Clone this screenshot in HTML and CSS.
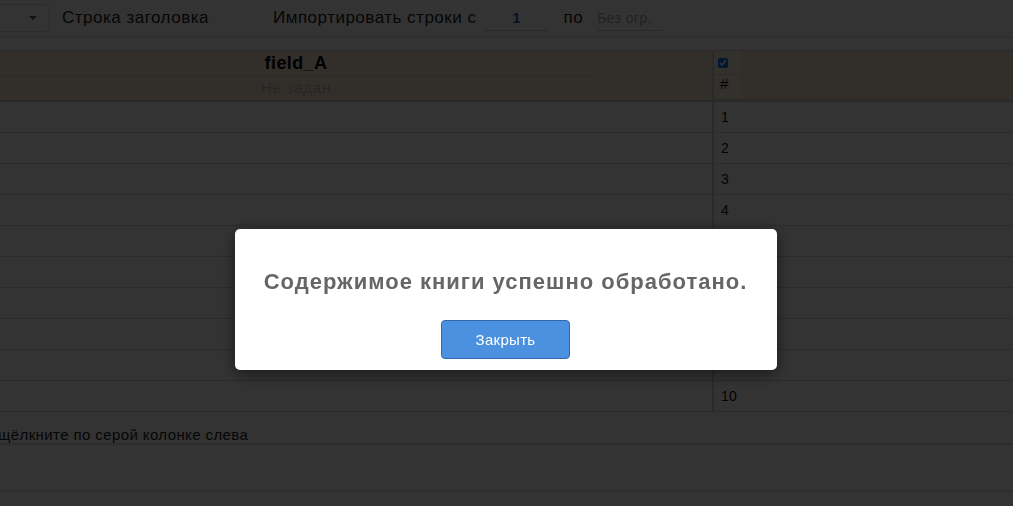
FILE: index.html
```html
<!DOCTYPE html>
<html lang="ru">
<head>
    <meta charset="UTF-8">
    <title>Импорт строк</title>
    <link rel="stylesheet" href="styles.css">
</head>
<body>
    <div class="toolbar">
        <div class="select"><span class="caret"></span></div>
        <label class="tool-label">Строка заголовка</label>
        <label class="tool-label range">Импортировать строки с</label>
        <input class="line-input from" type="text" value="1">
        <label class="tool-label">по</label>
        <input class="line-input to" type="text" placeholder="Без огр.">
    </div>

    <div class="sheet">
        <div class="row head">
            <div class="cell field">
                <div class="field-name">field_A</div>
                <div class="field-type">Не задан</div>
            </div>
            <div class="cell num">
                <div class="check"><input type="checkbox" checked></div>
                <div class="hash">#</div>
            </div>
        </div>
        <div id="rows"></div>
        <div class="hint">щёлкните по серой колонке слева</div>
        <div class="blank"></div>
    </div>

    <div class="overlay">
        <div class="dialog">
            <p class="dialog-text">Содержимое книги успешно обработано.</p>
            <button class="btn-close">Закрыть</button>
        </div>
    </div>

    <script>
        const rows = document.getElementById('rows');
        for (let i = 1; i <= 10; i++) {
            const row = document.createElement('div');
            row.className = 'row data';
            row.innerHTML = '<div class="cell field"></div><div class="cell num">' + i + '</div>';
            rows.appendChild(row);
        }
    </script>
</body>
</html>
```

FILE: styles.css
```css
body {
    margin: 0;
    font-family: "Liberation Sans", Arial, sans-serif;
    font-size: 14px;
    color: #000;
    background: #fff;
    overflow: hidden;
}
.toolbar {
    display: flex;
    align-items: center;
    height: 38px;
    border-bottom: 2px solid #e8e8e8;
    box-sizing: border-box;
}
.select {
    width: 60px;
    height: 28px;
    margin-left: -10px;
    border: 1px solid #ddd;
    border-radius: 4px;
    display: flex;
    align-items: center;
    justify-content: flex-end;
    padding-right: 12px;
    box-sizing: border-box;
}
.caret {
    width: 0;
    height: 0;
    border-left: 4px solid transparent;
    border-right: 4px solid transparent;
    border-top: 4px solid #555;
}
.tool-label {
    font-size: 17px;
    letter-spacing: 0.5px;
    color: #222;
    margin-left: 12px;
}
.tool-label.range {
    margin-left: 64px;
}
.line-input {
    border: none;
    border-bottom: 1px solid #ccc;
    height: 24px;
    font-family: inherit;
    font-size: 15px;
    outline: none;
    padding: 0;
    margin-left: 8px;
    background: transparent;
}
.line-input.from {
    width: 64px;
    margin-right: 3px;
    text-align: center;
    color: #1f5fb8;
    font-weight: bold;
}
.line-input.to {
    width: 66px;
    margin-left: 14px;
    font-size: 14px;
    letter-spacing: 0.4px;
}
.line-input.to::placeholder {
    color: #aaa;
}
.sheet {
    margin-top: 12px;
}
.row {
    display: flex;
    border-bottom: 1px solid #d8d8d8;
}
.cell {
    box-sizing: border-box;
}
.field {
    width: 714px;
    border-right: 2px solid #cfcfcf;
}
.num {
    flex: 1;
    padding-left: 7px;
}
.head {
    background: #fbead5;
    border-top: 1px solid #ccc;
    border-bottom: 2px solid #ccc;
}
.head .field {
    padding-right: 120px;
    text-align: center;
}
.field-name {
    height: 24px;
    line-height: 24px;
    font-weight: bold;
    font-size: 18px;
    letter-spacing: 0.4px;
    border-bottom: 1px solid #e8d3b6;
}
.field-type {
    height: 24px;
    line-height: 24px;
    color: #bbb;
    font-size: 15px;
    letter-spacing: 0.75px;
}
.head .num {
    padding: 0;
    border-bottom: 1px solid #e8d3b6;
}
.check {
    height: 24px;
    width: 26px;
    padding-left: 4px;
    display: flex;
    align-items: center;
    background: #fff3e3;
    border-bottom: 1px solid #e8d3b6;
    box-sizing: border-box;
}
.check input {
    width: 10px;
    height: 10px;
    margin: 0;
}
.hash {
    width: 26px;
    height: 24px;
    line-height: 18px;
    padding-left: 6px;
    font-size: 15px;
    background: #fff3e3;
    box-sizing: border-box;
}
.data {
    height: 31px;
    box-sizing: border-box;
}
.data .num {
    line-height: 30px;
    font-size: 14px;
    letter-spacing: 0.3px;
    color: #111;
}
.hint {
    height: 33px;
    line-height: 45px;
    margin-left: -2px;
    border-bottom: 2px solid #e0e0e0;
    font-size: 15px;
    letter-spacing: 0.4px;
    color: #222;
    box-sizing: border-box;
}
.blank {
    height: 45px;
    border-bottom: 2px solid #e6e6e6;
}
.overlay {
    position: fixed;
    inset: 0;
    background: rgba(0, 0, 0, 0.8);
    display: flex;
    justify-content: center;
    align-items: flex-start;
}
.dialog {
    margin-top: 229px;
    margin-left: -2px;
    width: 542px;
    height: 141px;
    background: #fff;
    border-radius: 5px;
    box-shadow: 0 4px 16px rgba(0, 0, 0, 0.5);
    text-align: center;
    box-sizing: border-box;
    padding-top: 40px;
}
.dialog-text {
    margin: 0;
    font-size: 22px;
    font-weight: bold;
    letter-spacing: 1px;
    color: #666;
    line-height: 26px;
}
.btn-close {
    margin-top: 25px;
    width: 129px;
    height: 39px;
    background: #4c91df;
    border: 1px solid #3368a8;
    border-radius: 4px;
    color: #fff;
    font-family: inherit;
    font-size: 15px;
    letter-spacing: 0.3px;
    cursor: pointer;
}
```
